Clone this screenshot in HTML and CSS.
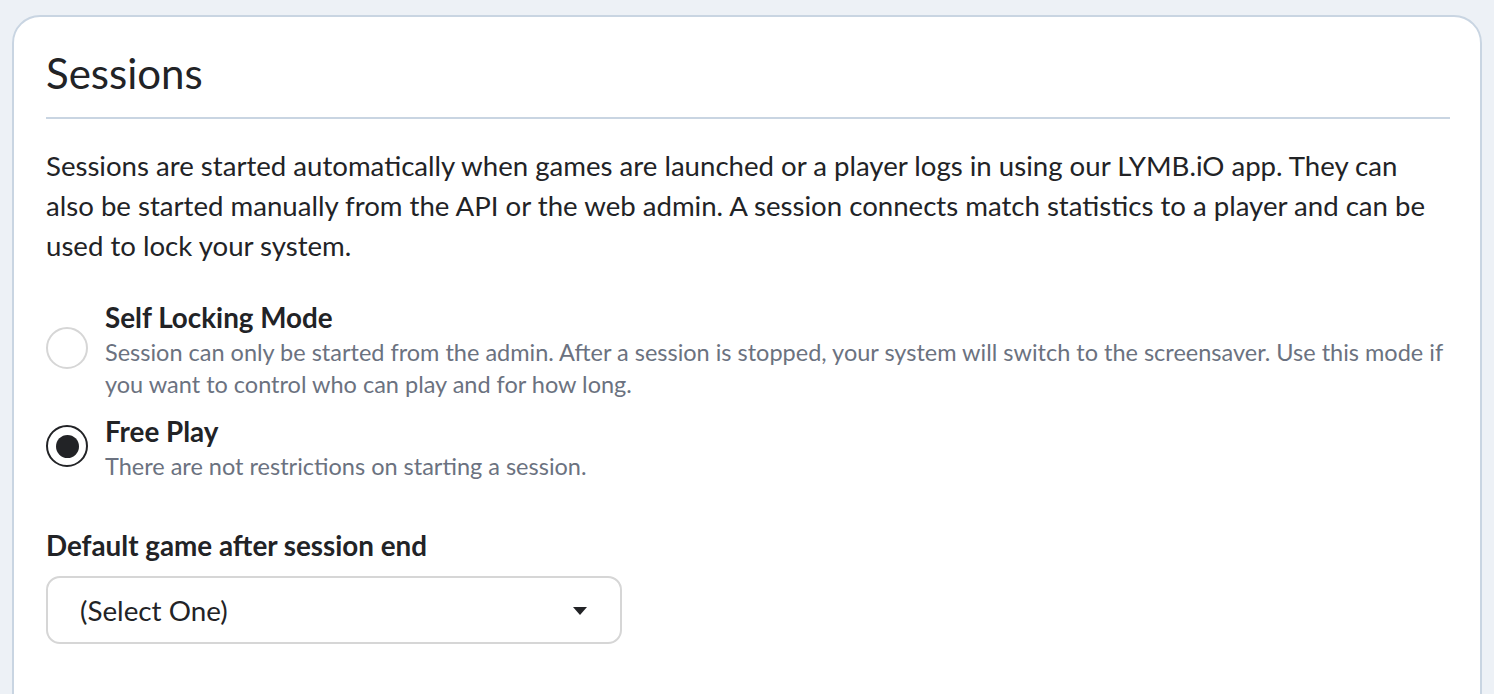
FILE: index.html
```html
<!DOCTYPE html>
<html lang="en">
<head>
    <meta charset="UTF-8">
    <meta name="viewport" content="width=device-width, initial-scale=1.0">
    <title>Sessions</title>
    <link rel="stylesheet" href="styles.css">
</head>
<body>

    <div class="card">
        <h1>Sessions</h1>
        <p class="intro">Sessions are started automatically when games are launched or a player logs in using our LYMB.iO app. They can also be started manually from the API or the web admin. A session connects match statistics to a player and can be used to lock your system.</p>

        <div class="options">
            <label class="option">
                <input type="radio" name="mode" value="self_locking">
                <span class="option-text">
                    <span class="option-title">Self Locking Mode</span>
                    <span class="option-desc">Session can only be started from the admin. After a session is stopped, your system will switch to the screensaver. Use this mode if you want to control who can play and for how long.</span>
                </span>
            </label>
            <label class="option">
                <input type="radio" name="mode" value="free_play" checked>
                <span class="option-text">
                    <span class="option-title">Free Play</span>
                    <span class="option-desc">There are not restrictions on starting a session.</span>
                </span>
            </label>
        </div>

        <label class="field-label" for="defaultGame">Default game after session end</label>
        <div class="select-wrap">
            <select id="defaultGame" name="defaultGame">
                <option>(Select One)</option>
            </select>
            <span class="caret"></span>
        </div>
    </div>

</body>
</html>
```

FILE: styles.css
```css
* {
    margin: 0;
    padding: 0;
    box-sizing: border-box;
    font-family: 'Lato', sans-serif;
}
body {
    background-color: #edf1f6;
    color: #222326;
    padding: 15px 12px 0;
    overflow: hidden;
}
.card {
    background-color: #ffffff;
    border: 2px solid #c9d5e2;
    border-radius: 28px;
    padding: 32px 30px 0 32px;
    min-height: 800px;
}
h1 {
    font-size: 42px;
    font-weight: 400;
    line-height: 48px;
    padding-bottom: 20px;
    border-bottom: 2px solid #c9d5e2;
}
.intro {
    font-size: 27.6px;
    line-height: 40px;
    margin-top: 27px;
    padding-right: 2px;
}
.options {
    display: flex;
    flex-direction: column;
    gap: 14px;
    margin-top: 34px;
}
.option {
    display: flex;
    align-items: center;
    gap: 17px;
    cursor: pointer;
}
.option input {
    appearance: none;
    -webkit-appearance: none;
    flex: 0 0 42px;
    width: 42px;
    height: 42px;
    border: 2px solid #d6d6d6;
    border-radius: 50%;
    display: grid;
    place-items: center;
    margin-top: -4px;
}
.option input:checked {
    border: 2.5px solid #222326;
}
.option input:checked::after {
    content: "";
    width: 23px;
    height: 23px;
    border-radius: 50%;
    background-color: #222326;
}
.option-text {
    display: flex;
    flex-direction: column;
}
.option-title {
    font-size: 27.8px;
    font-weight: 700;
    line-height: 36px;
}
.option-desc {
    font-size: 23.5px;
    line-height: 32px;
    color: #6b7280;
}
.field-label {
    display: block;
    font-size: 27.8px;
    font-weight: 700;
    line-height: 36px;
    margin-top: 46px;
}
.select-wrap {
    position: relative;
    width: 576px;
    margin-top: 12px;
}
select {
    appearance: none;
    -webkit-appearance: none;
    width: 100%;
    height: 68px;
    padding: 0 60px 0 32px;
    font-size: 27.8px;
    color: #222326;
    background-color: #ffffff;
    border: 2px solid #d6d6d6;
    border-radius: 14px;
    outline: none;
}
.caret {
    position: absolute;
    right: 35px;
    top: 31px;
    width: 0;
    height: 0;
    border-left: 7.5px solid transparent;
    border-right: 7.5px solid transparent;
    border-top: 8px solid #222326;
    pointer-events: none;
}
```
